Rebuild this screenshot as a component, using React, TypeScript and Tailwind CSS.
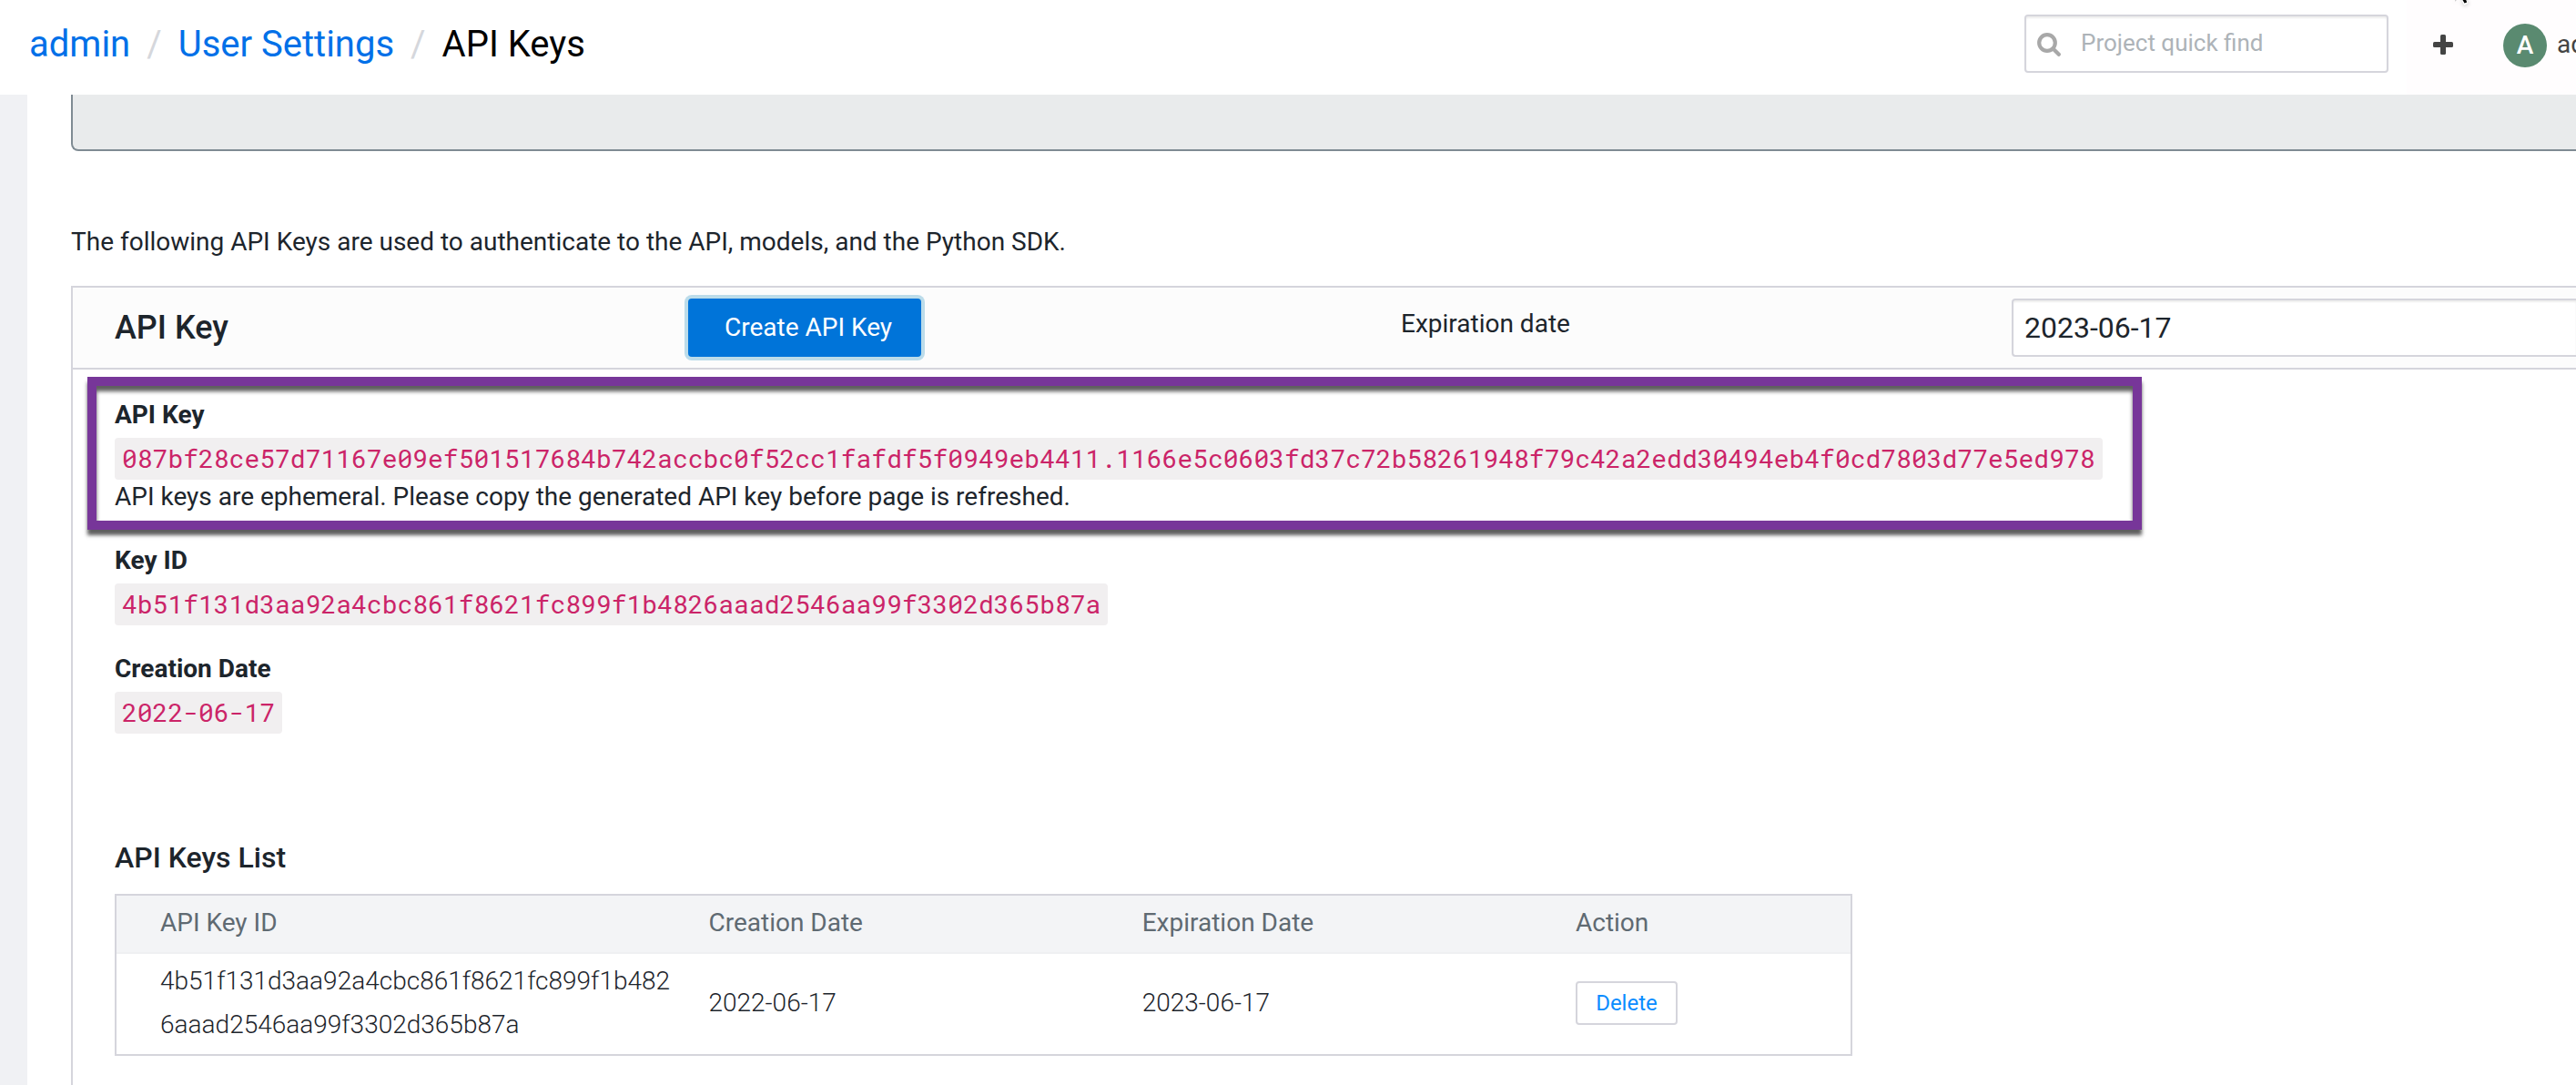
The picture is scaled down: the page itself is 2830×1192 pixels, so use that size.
import type { ReactNode } from "react";

const API_KEY =
  "087bf28ce57d71167e09ef501517684b742accbc0f52cc1fafdf5f0949eb4411.1166e5c0603fd37c72b58261948f79c42a2edd30494eb4f0cd7803d77e5ed978";
const KEY_ID = "4b51f131d3aa92a4cbc861f8621fc899f1b4826aaad2546aa99f3302d365b87a";

function Code({ children }: { children: ReactNode }) {
  return (
    <code className="mt-1.5 block w-fit rounded bg-[#f1eff0] px-2 py-[3px] font-['Roboto_Mono','Noto_Sans_Mono','Liberation_Mono',monospace] leading-10 text-[#cb2468]">
      {children}
    </code>
  );
}

function SearchIcon() {
  return (
    <svg aria-hidden="true" viewBox="0 0 26 26" className="pointer-events-none absolute top-5 left-3.5 size-[26px] text-[#a8a8a8]">
      <circle cx="11" cy="11" r="8.8" fill="none" stroke="currentColor" strokeWidth="4.2" />
      <path d="M17.5 17.5 23.8 23.8" stroke="currentColor" strokeWidth="4.2" strokeLinecap="round" />
    </svg>
  );
}

function PlusIcon() {
  return (
    <svg aria-hidden="true" viewBox="0 0 22 22" className="size-[22px] text-[#444]" fill="currentColor">
      <rect x="0" y="8" width="22" height="6" rx="1.6" />
      <rect x="8" y="0" width="6" height="22" rx="1.6" />
    </svg>
  );
}

function Pointer() {
  return (
    <svg aria-hidden="true" viewBox="0 0 18 8" className="absolute top-0 right-[116px] h-2 w-[18px] drop-shadow-sm">
      <path d="M7.500 0 11 6.200 16.200 3.600 14.500 0Z" fill="#fff" stroke="#ddd" strokeWidth="0.6" />
      <path d="M9.500 0 11.500 3.600 14.200 2.400 13.200 0Z" fill="#000" />
      <path d="M1 0 1 1.800 3 0Z" fill="#ccc" />
    </svg>
  );
}

function Header() {
  return (
    <header className="relative flex h-[104px] shrink-0 items-stretch overflow-hidden whitespace-nowrap pl-8">
      <nav aria-label="Breadcrumb" className="flex items-center gap-[18px] pb-1.5 text-[40px] leading-[48px]">
        <a href="#admin" className="text-[#0070e8]">admin</a>
        <span className="text-[#d5d7dc]">/</span>
        <a href="#settings" className="text-[#0070e8]">User Settings</a>
        <span className="text-[#d5d7dc]">/</span>
        <span className="text-black">API Keys</span>
      </nav>
      <div className="ml-auto flex items-center pb-2">
        <div className="relative">
          <input
            type="text"
            aria-label="Project quick find"
            placeholder="Project quick find"
            className="block h-16 w-[400px] rounded border-2 border-[#d5d5dc] bg-white pb-0.5 pl-[60px] text-[26px] shadow-[inset_0_2px_2px_rgba(0,0,0,0.07)] placeholder:text-[#adb3b8]"
          />
          <SearchIcon />
        </div>
      </div>
      <div className="ml-5 flex items-center bg-[#fffdfe] pb-1.5 pl-[29px]">
        <button type="button" aria-label="Create">
          <PlusIcon />
        </button>
        <a href="#account" className="ml-[55px] flex items-center pt-0.5 text-[#444]">
          <span className="flex size-12 items-center justify-center rounded-full bg-[#5a8a70] font-medium text-white">A</span>
          <span className="ml-[11px] w-[21px] overflow-hidden pb-0.5">admin</span>
        </a>
      </div>
      <Pointer />
    </header>
  );
}

function KeysTable() {
  return (
    <table className="mt-5 w-[70.6%] table-fixed border-separate border-spacing-0 border-2 border-[#d5d5dc] text-left leading-[48px]">
      <colgroup>
        <col className="w-[33.2%]" />
        <col className="w-[25%]" />
        <col className="w-[25%]" />
        <col />
      </colgroup>
      <thead className="bg-[#f3f4f6] text-[#5f6a72]">
        <tr>
          <th className="border-b-2 border-[#eff0f2] pt-1.5 pr-4 pb-2 pl-12 font-normal">API Key ID</th>
          <th className="border-b-2 border-[#eff0f2] pt-1.5 pb-2 pl-[18px] font-normal">Creation Date</th>
          <th className="border-b-2 border-[#eff0f2] pt-1.5 pb-2 pl-[18px] font-normal">Expiration Date</th>
          <th className="border-b-2 border-[#eff0f2] pt-1.5 pb-2 pl-[18px] font-normal">Action</th>
        </tr>
      </thead>
      <tbody className="font-light">
        <tr>
          <td className="break-all pt-1.5 pr-4 pb-2 pl-12">{KEY_ID}</td>
          <td className="pt-1.5 pb-2 pl-[18px]">2022-06-17</td>
          <td className="pt-1.5 pb-2 pl-[18px]">2023-06-17</td>
          <td className="pt-1.5 pb-2 pl-[18px]">
            <button type="button" className="flex h-12 w-28 items-center justify-center rounded border-2 border-[#d5d5dc] bg-white text-2xl font-normal text-[#0a8cff]">
              Delete
            </button>
          </td>
        </tr>
      </tbody>
    </table>
  );
}

export default function App() {
  return (
    <div className="flex min-h-screen flex-col overflow-hidden bg-white font-['Roboto',sans-serif] text-[28px] leading-[38px] text-[#1d252c]">
      <Header />
      <div className="flex grow">
        <div className="w-[30px] shrink-0 bg-[#f0f1f4]" />
        <main className="flex min-w-0 grow flex-col pl-12">
          <textarea
            readOnly
            aria-label="Key details"
            className="block h-[62px] w-full resize-none rounded-bl-lg border-b-2 border-l-2 border-[#7f8b93] bg-[#e9ebec]"
          />
          <p className="mt-[81px]">The following API Keys are used to authenticate to the API, models, and the Python SDK.</p>
          <section className="mt-[29px] grow border-t-2 border-l-2 border-[#d5d5dc]">
            <div className="grid h-[90px] grid-cols-[630fr_783fr_671fr_620fr] items-center border-b-2 border-[#d5d5dc] bg-[#fcfcfc] pl-[46px]">
              <h2 className="text-4xl font-medium">API Key</h2>
              <div>
                <button type="button" className="block h-16 rounded bg-[#0074d9] pr-8 pl-10 text-white ring-4 ring-[#bcdcea]">
                  Create API Key
                </button>
              </div>
              <label htmlFor="expiration" className="pb-2">Expiration date</label>
              <input
                id="expiration"
                type="text"
                defaultValue="2023-06-17"
                className="h-16 w-full rounded-l border-2 border-r-0 border-[#d5d5dc] bg-white pl-3 text-[32px] shadow-[inset_0_2px_2px_rgba(0,0,0,0.07)]"
              />
            </div>
            <div className="mt-2 ml-4 w-fit border-[10px] border-[#773699] pt-[13px] pr-[33px] pb-[7px] pl-5 shadow-[0_6px_4px_rgba(0,0,0,0.63),inset_0_6px_4px_rgba(0,0,0,0.63)]">
              <h3 className="font-bold">API Key</h3>
              <Code>{API_KEY}</Code>
              <p>API keys are ephemeral. Please copy the generated API key before page is refreshed.</p>
            </div>
            <div className="pl-[46px]">
              <h3 className="mt-[15px] font-bold">Key ID</h3>
              <Code>{KEY_ID}</Code>
              <h3 className="mt-[29px] font-bold">Creation Date</h3>
              <Code>2022-06-17</Code>
              <h2 className="mt-[116px] text-[32px] leading-10 font-medium">API Keys List</h2>
              <KeysTable />
            </div>
          </section>
        </main>
      </div>
    </div>
  );
}
